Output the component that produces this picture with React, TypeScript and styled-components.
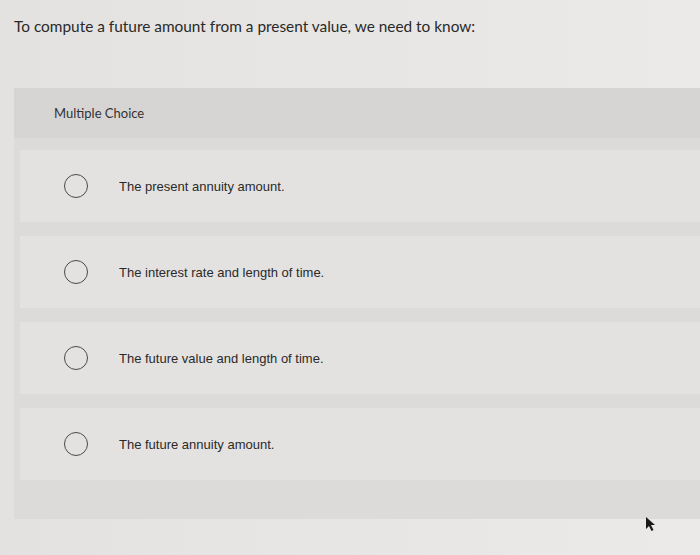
import styled, { createGlobalStyle } from 'styled-components';

const GlobalStyle = createGlobalStyle`
    html, body {
        margin: 0;
        background-color: #e5e4e2;
        font-family: Lato, "Open Sans", sans-serif;
        color: #2f2f2f;
    }
`;

const Page = styled.div`
    position: relative;
    width: 700px;
    height: 555px;
    overflow: hidden;
    padding: 16px 0 0 14px;
    box-sizing: border-box;
    background: linear-gradient(90deg, #e3e2e0 0%, #e8e7e5 60%, #ebeae8 100%);
`;

const Question = styled.div`
    font-size: 15.4px;
    line-height: 20px;
    color: #2a2a2a;
`;

const Panel = styled.div`
    margin-top: 52px;
    background-color: #dcdbd9;
    padding-bottom: 39px;
`;

const PanelHeader = styled.div`
    height: 50px;
    display: flex;
    align-items: center;
    padding-left: 40px;
    font-size: 13px;
    color: #333;
    background-color: #d6d5d3;
`;

const Options = styled.div`
    display: flex;
    flex-direction: column;
    gap: 14px;
    padding: 12px 0 0 6px;
`;

const OptionRow = styled.label`
    height: 72px;
    display: flex;
    align-items: center;
    background-color: #e3e2e0;
    cursor: pointer;
`;

const Radio = styled.span`
    width: 22px;
    height: 22px;
    margin-left: 44px;
    margin-right: 31px;
    border: 1.7px solid #4a4a4a;
    border-radius: 50%;
    flex-shrink: 0;
`;

const OptionText = styled.span`
    font-family: "Liberation Sans", Arial, sans-serif;
    font-size: 13px;
    color: #2a2a2a;
`;

const Cursor = styled.svg`
    position: absolute;
    left: 645px;
    top: 516px;
`;

const CHOICES = [
    'The present annuity amount.',
    'The interest rate and length of time.',
    'The future value and length of time.',
    'The future annuity amount.'
];

function App() {
    return (
        <Page>
            <GlobalStyle />
            <Question>To compute a future amount from a present value, we need to know:</Question>
            <Panel>
                <PanelHeader>Multiple Choice</PanelHeader>
                <Options>
                    {CHOICES.map((choice, index) => (
                        <OptionRow key={index}>
                            <Radio />
                            <OptionText>{choice}</OptionText>
                        </OptionRow>
                    ))}
                </Options>
            </Panel>
            <Cursor width="12" height="16" viewBox="0 0 12 16">
                <path d="M1 1 L1 13 L4 10 L6.5 15 L8.5 14 L6 9 L10 9 Z" fill="#1a1a1a" />
            </Cursor>
        </Page>
    );
}

export default App;
